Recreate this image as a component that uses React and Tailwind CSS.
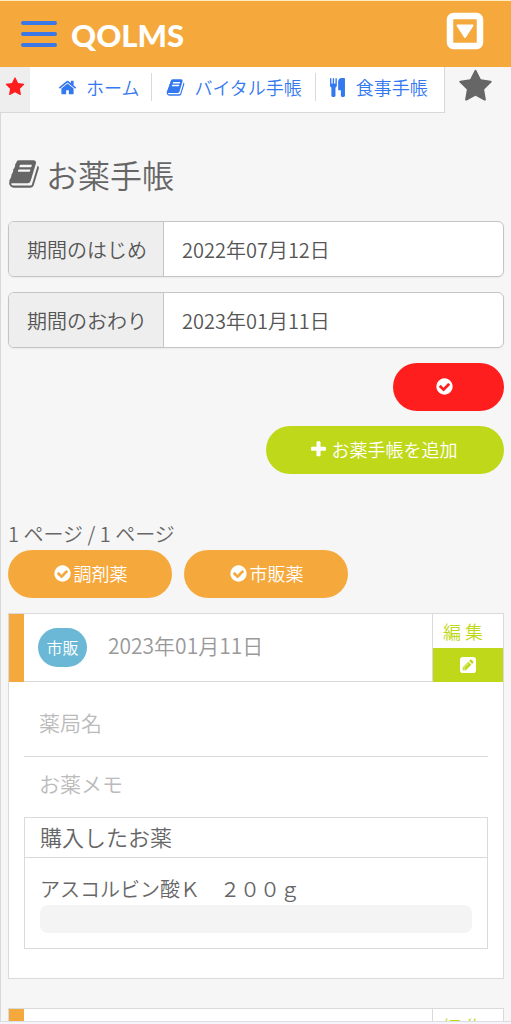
import React from "react";

const icons = {
  book: "M1703 478q40 57 18 129l-275 906q-19 64-76.5 107.5t-122.5 43.5h-923q-77 0-148.5-53.5t-99.5-131.5q-24-67-2-127 0-4 3-27t4-37q1-8-3-21.5t-3-19.5q2-11 8-21t16.5-23.5 16.5-23.5q23-38 45-91.5t30-91.5q3-10 .5-30t-.5-28q3-11 17-28t17-23q21-36 42-92t25-90q1-9-2.5-32t.5-28q4-13 22-30.5t22-22.5q19-26 42.5-84.5t27.5-96.5q1-8-3-25.5t-2-26.5q2-8 9-18t18-23 17-21q8-12 16.5-30.5t15-35 16-36 19.5-32 26.5-23.5 36-11.5 47.5 5.5l-1 3q38-9 51-9h761q74 0 114 56t18 130l-274 906q-36 119-71.5 153.5t-128.5 34.5h-869q-27 0-38 15-11 16-1 43 24 70 144 70h923q29 0 56-15.5t35-41.5l300-987q7-22 5-57 38 15 59 43zm-1064 2q-4 13 2 22.5t20 9.5h608q13 0 25.5-9.5t16.5-22.5l21-64q4-13-2-22.5t-20-9.5h-608q-13 0-25.5 9.5t-16.5 22.5zm-83 256q-4 13 2 22.5t20 9.5h608q13 0 25.5-9.5t16.5-22.5l21-64q4-13-2-22.5t-20-9.5h-608q-13 0-25.5 9.5t-16.5 22.5z",
  check: "M1412 734q0-28-18-46l-91-90q-19-19-45-19t-45 19l-408 407-226-226q-19-19-45-19t-45 19l-91 90q-18 18-18 46 0 27 18 45l362 362q19 19 45 19 27 0 46-19l543-543q18-18 18-45zm252 162q0 209-103 385.5t-279.5 279.5-385.5 103-385.5-103-279.5-279.5-103-385.5 103-385.5 279.5-279.5 385.5-103 385.5 103 279.5 279.5 103 385.5z",
  home: "M1472 992v480q0 26-19 45t-45 19h-384v-384h-256v384h-384q-26 0-45-19t-19-45v-480q0-1 .5-3t.5-3l575-474 575 474q1 2 1 6zm223-69l-62 74q-8 9-21 11h-3q-13 0-21-7l-692-577-692 577q-12 8-24 7-13-2-21-11l-62-74q-8-10-7-23.5t11-21.5l719-599q32-26 76-26t76 26l244 204v-195q0-14 9-23t23-9h192q14 0 23 9t9 23v408l219 182q10 8 11 21.5t-7 23.5z",
  cutlery: "M832 64v640q0 61-35.5 111t-92.5 70v779q0 52-38 90t-90 38h-128q-52 0-90-38t-38-90v-779q-57-20-92.5-70t-35.5-111v-640q0-26 19-45t45-19 45 19 19 45v416q0 26 19 45t45 19 45-19 19-45v-416q0-26 19-45t45-19 45 19 19 45v416q0 26 19 45t45 19 45-19 19-45v-416q0-26 19-45t45-19 45 19 19 45zm768 0v1600q0 52-38 90t-90 38h-128q-52 0-90-38t-38-90v-512h-224q-13 0-22.5-9.5t-9.5-22.5v-800q0-132 94-226t226-94h256q26 0 45 19t19 45z",
  plus: "M1600 736v192q0 40-28 68t-68 28h-416v416q0 40-28 68t-68 28h-192q-40 0-68-28t-28-68v-416h-416q-40 0-68-28t-28-68v-192q0-40 28-68t68-28h416v-416q0-40 28-68t68-28h192q40 0 68 28t28 68v416h416q40 0 68 28t28 68z",
  star: "M1728 647q0 22-26 48l-363 354 86 500q1 7 1 20 0 21-10.5 35.5t-30.5 14.5q-19 0-40-12l-449-236-449 236q-22 12-40 12-21 0-31.5-14.5t-10.5-35.5q0-6 2-20l86-500-364-354q-25-27-25-48 0-37 56-46l502-73 225-455q19-41 49-41t49 41l225 455 502 73q56 9 56 46z",
};

function Icon({ name, className }) {
  return (
    <svg viewBox="0 0 1792 1792" fill="currentColor" aria-hidden="true" className={`shrink-0 ${className}`}>
      <path d={icons[name]} />
    </svg>
  );
}

function DateField({ id, label, value }) {
  return (
    <div className="flex h-14 rounded-md border border-[#c4c4c4] bg-white overflow-hidden text-xl text-[#555] shadow-xs">
      <label htmlFor={id} className="flex w-[155px] shrink-0 items-center border-r border-[#c4c4c4] bg-[#eee] pt-0.5 pl-[18px]">
        {label}
      </label>
      <input id={id} type="text" defaultValue={value} className="min-w-0 flex-1 px-[18px] pt-0.5 outline-none" />
    </div>
  );
}

function MedicineCard({ date, pharmacyLabel, memoLabel, medicine }) {
  return (
    <article className="border border-[#dadada] bg-white">
      <header className="flex h-[68px] border-b border-[#dadada]">
        <div className="-mb-px w-[15px] bg-[#f5a93d]" />
        <div className="flex flex-1 items-center pl-[14px]">
          <span className="flex h-[39px] w-[49px] items-center justify-center rounded-full bg-[#6bb8d6] pb-0.5 text-base text-white">
            市販
          </span>
          <time className="pb-1 pl-[21px] text-[21px] text-[#999]">{date}</time>
        </div>
        <button type="button" className="-mb-px flex w-[71px] flex-col border-l border-[#dadada] text-lg text-[#bfd91a]">
          <span className="flex h-[34px] items-center pl-[10px]">編 集</span>
          <span className="flex w-full flex-1 items-center justify-center bg-[#bfd91a]">
            <svg viewBox="0 0 16 16" aria-hidden="true" className="size-4">
              <rect width="16" height="16" rx="2.8" fill="#fff" />
              <path d="M2.8 13.2V10.2L8.3 4.7l3 3-5.5 5.5zM9.1 3.9l1.1-1.1q.7-.6 1.4 0l1.6 1.6q.6.7 0 1.4L12.1 6.9z" fill="currentColor" />
              <path d="M4 10.7L8.3 6.4M4 11.1v.9h1" fill="none" stroke="#fff" strokeWidth=".6" />
            </svg>
          </span>
        </button>
      </header>

      <div className="px-[15px] pb-[29px] text-[21px] leading-8">
        <p className="border-b border-[#dadada] px-[15px] pt-6 pb-[18px] text-[#bbb]">{pharmacyLabel}</p>
        <p className="px-[15px] pt-2.5 pb-[18px] text-[#bbb]">{memoLabel}</p>

        <section className="border border-[#dadada] text-[#666]">
          <h2 className="border-b border-[#dadada] px-[15px] pt-0.5 pb-[5px] text-[22px] leading-8">購入したお薬</h2>
          <div className="px-[15px] pt-[17px] pb-[15px]">
            <p className="pb-0.5 text-xl leading-7">{medicine}</p>
            <div className="h-7 rounded-lg bg-[#f4f4f4]" />
          </div>
        </section>
      </div>
    </article>
  );
}

function App() {
  return (
    <div className="flex h-screen flex-col bg-[#f6f6f6] font-['Noto_Sans_CJK_JP',sans-serif] font-[350] text-[#666]">
      {/* Header */}
      <header className="flex h-[67px] shrink-0 items-center border-t border-[#fbeec0] bg-[#f5a93d] pr-[27px] pl-[21px]">
        <button type="button" aria-label="メニュー" className="flex flex-col gap-[7px]">
          <span className="h-1 w-9 rounded-full bg-[#3b78e7]" />
          <span className="h-1 w-9 rounded-full bg-[#3b78e7]" />
          <span className="h-1 w-9 rounded-full bg-[#3b78e7]" />
        </button>
        <a href="#" className="pt-0.5 pl-[14px] font-['Lato',sans-serif] text-[31px] font-black text-white">
          QOLMS
        </a>
        <button type="button" aria-label="開く" className="mb-1.5 ml-auto">
          <svg viewBox="0 0 38 38" className="size-[38px]">
            <rect x="4" y="4" width="30" height="30" rx="3.5" fill="none" stroke="#fff" strokeWidth="6.5" />
            <path d="M11.5 13.5h15L19 25z" fill="#fff" stroke="#fff" strokeWidth="2" strokeLinejoin="round" />
          </svg>
        </button>
      </header>

      {/* Tabs */}
      <div className="flex h-[46px] shrink-0">
        <div className="flex w-[30px] justify-center border-b border-[#d8d8d8] bg-[#eee] pt-2.5 text-[#ff1e1e]">
          <Icon name="star" className="size-5" />
        </div>
        <nav className="flex flex-1 border-r border-b border-[#d8d8d8] bg-white pt-1.5 text-lg whitespace-nowrap text-[#3478f0]">
          <a href="#" className="flex h-7 items-center gap-[9px] border-r border-[#dadada] pr-3 pl-7">
            <Icon name="home" className="size-[19px]" />
            ホーム
          </a>
          <a href="#" className="flex h-7 items-center gap-[9px] border-r border-[#dadada] pr-[13px] pl-[14px]">
            <Icon name="book" className="size-[19px]" />
            バイタル手帳
          </a>
          <a href="#" className="flex h-7 items-center gap-[9px] pl-3">
            <Icon name="cutlery" className="size-[19px]" />
            食事手帳
          </a>
        </nav>
        <button type="button" aria-label="お気に入り" className="flex w-[66px] justify-center pt-0.5 pr-1.5">
          <Icon name="star" className="size-[35px]" />
        </button>
      </div>

      <main className="min-h-0 flex-1 overflow-hidden border-l border-[#d8d8d8] px-[7px]">
        <h1 className="flex items-center gap-1.5 pt-9 pb-[22px] text-[32px] leading-[50px]">
          <Icon name="book" className="size-8" />
          お薬手帳
        </h1>

        <form className="flex flex-col items-end gap-[15px]">
          <div className="flex w-full flex-col gap-[15px]">
            <DateField id="from" label="期間のはじめ" value="2022年07月12日" />
            <DateField id="to" label="期間のおわり" value="2023年01月11日" />
          </div>
          <button type="submit" aria-label="検索" className="flex h-12 w-[111px] items-center justify-center rounded-full bg-[#ff1e1e] pr-2 pb-0.5 text-white">
            <Icon name="check" className="size-[19px]" />
          </button>
          <button type="button" className="flex h-12 w-[238px] items-center justify-center gap-1 rounded-full bg-[#bfd91a] pr-1 pb-0.5 text-lg text-white">
            <Icon name="plus" className="size-[19px]" />
            お薬手帳を追加
          </button>
        </form>

        <p className="pt-[45px] pb-px text-xl leading-[30px]">1 ページ / 1 ページ</p>
        <div className="flex gap-3 pb-[15px] text-lg text-white">
          <button type="button" className="flex h-12 w-[164px] items-center justify-center gap-0.5 rounded-full bg-[#f5a93d] pb-0.5">
            <Icon name="check" className="size-[19px]" />
            調剤薬
          </button>
          <button type="button" className="flex h-12 w-[164px] items-center justify-center gap-0.5 rounded-full bg-[#f5a93d] pb-0.5">
            <Icon name="check" className="size-[19px]" />
            市販薬
          </button>
        </div>

        {/* Records */}
        <div className="flex flex-col gap-[29px]">
          <MedicineCard date="2023年01月11日" pharmacyLabel="薬局名" memoLabel="お薬メモ" medicine="アスコルビン酸Ｋ　２００ｇ" />
          <MedicineCard date="2023年01月11日" pharmacyLabel="薬局名" memoLabel="お薬メモ" medicine="アスコルビン酸Ｋ　２００ｇ" />
        </div>
      </main>
      <div className="h-[3px] shrink-0 border-t border-[#dddde4] bg-[#f4f4fa]" />
    </div>
  );
}

export default App;
